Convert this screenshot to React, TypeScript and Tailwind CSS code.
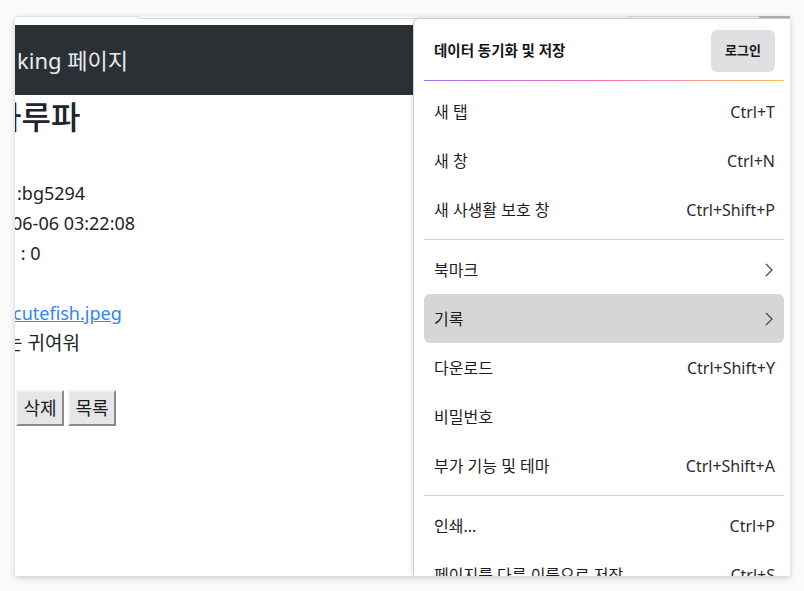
const menuFont = { fontFamily: '"Noto Sans", "Noto Sans CJK KR", sans-serif' }
const pageFont = { fontFamily: '"Noto Sans", "Noto Sans CJK KR", sans-serif' }

type Item = { label: string; shortcut?: string; arrow?: boolean; active?: boolean }

const group1: Item[] = [
  { label: '새 탭', shortcut: 'Ctrl+T' },
  { label: '새 창', shortcut: 'Ctrl+N' },
  { label: '새 사생활 보호 창', shortcut: 'Ctrl+Shift+P' },
]

const group2: Item[] = [
  { label: '북마크', arrow: true },
  { label: '기록', arrow: true, active: true },
  { label: '다운로드', shortcut: 'Ctrl+Shift+Y' },
  { label: '비밀번호' },
  { label: '부가 기능 및 테마', shortcut: 'Ctrl+Shift+A' },
]

const group3: Item[] = [
  { label: '인쇄...', shortcut: 'Ctrl+P' },
  { label: '페이지를 다른 이름으로 저장', shortcut: 'Ctrl+S' },
]

function Chevron() {
  return (
    <svg width="12" height="16" viewBox="0 0 12 16" fill="none">
      <polyline points="3,2 9,8 3,14" stroke="#4a4a4f" strokeWidth="1.3" />
    </svg>
  )
}

function MenuRow({ item }: { item: Item }) {
  return (
    <div
      className={`flex h-[49px] shrink-0 items-center justify-between rounded-md pl-[10px] pr-[9px] text-[16px] text-[#1c1b22] ${
        item.active ? 'bg-[#d6d6d6]' : ''
      }`}
    >
      <span>{item.label}</span>
      {item.shortcut && <span className="text-[#2b2a33]">{item.shortcut}</span>}
      {item.arrow && <Chevron />}
    </div>
  )
}

function Separator() {
  return <div className="my-[5px] h-px shrink-0 bg-[#cfcfd3]" />
}

export default function App() {
  return (
    <div className="relative h-[591px] w-[804px] overflow-hidden bg-[#fafafa]">
      {/* window */}
      <div className="absolute left-[15px] top-[16px] h-[560px] w-[775px] overflow-hidden bg-white shadow-[0_2px_6px_rgba(0,0,0,0.18)]">
        {/* top strip */}
        <div className="relative h-[9px] border-t border-[#dcdcdc] bg-white">
          <div className="absolute left-[122px] top-[-1px] h-[3px] w-[493px] rounded-b-md border-x border-b border-[#d8d8d8] bg-[#f6f6f6]" />
          <div className="absolute right-0 top-[-1px] h-[3px] w-[31px] bg-[#b5b5b5]" />
        </div>

        {/* page */}
        <div className="text-[#212529]" style={pageFont}>
          <div className="flex h-[70px] items-center bg-[#2b3035] pl-[2px] text-[22px] text-[#e9ecef]">
            king 페이지
          </div>
          <div className="mt-[4px] -ml-[23px] whitespace-nowrap text-[32px] font-medium leading-[36px]">하루파</div>
          <div className="mt-[43px] text-[18px] leading-[30px]">
            <div className="pl-[2px]">:bg5294</div>
            <div className="-ml-[3px]">06-06 03:22:08</div>
            <div className="pl-[1px]">&nbsp;: 0</div>
            <div className="h-[30px]" />
            <div className="-ml-[2px]">
              <span className="text-[#3285f5] underline">cutefish.jpeg</span>
            </div>
            <div className="-ml-[10px] text-[19px]">는 귀여워</div>
          </div>
          <div className="mt-[32px] flex gap-[4px] pl-[1px]">
            {['삭제', '목록'].map((b) => (
              <button
                key={b}
                className="flex h-[36px] w-[48px] items-center justify-center border-2 border-b-[#8a8a8a] border-l-[#f2f2f2] border-r-[#8a8a8a] border-t-[#f2f2f2] bg-[#e6e6e8] text-[18px] text-[#1a1a1a]"
              >
                {b}
              </button>
            ))}
          </div>
        </div>

        {/* app menu */}
        <div
          className="absolute bottom-0 left-[398px] top-[2px] flex w-[377px] flex-col overflow-hidden rounded-tl-md border-l border-t border-[#cfcfcf] bg-white pl-[10px] pr-[6px] shadow-[0_0_6px_rgba(0,0,0,0.15)]"
          style={menuFont}
        >
          <div className="flex shrink-0 items-center justify-between pb-[8px] pl-[10px] pr-[9px] pt-[11px]">
            <span className="text-[14.5px] font-bold text-[#15141a]">데이터 동기화 및 저장</span>
            <button className="flex h-[42px] w-[64px] items-center justify-center rounded-md bg-[#e0e0e2] text-[13px] font-bold text-[#15141a]">
              로그인
            </button>
          </div>
          <div className="h-px shrink-0 bg-gradient-to-r from-[#a66cf5] via-[#ff6ab5] to-[#ffbd4f]" />
          <div className="h-[6px] shrink-0" />
          {group1.map((i) => (
            <MenuRow key={i.label} item={i} />
          ))}
          <Separator />
          {group2.map((i) => (
            <MenuRow key={i.label} item={i} />
          ))}
          <Separator />
          {group3.map((i) => (
            <MenuRow key={i.label} item={i} />
          ))}
        </div>
      </div>
    </div>
  )
}
